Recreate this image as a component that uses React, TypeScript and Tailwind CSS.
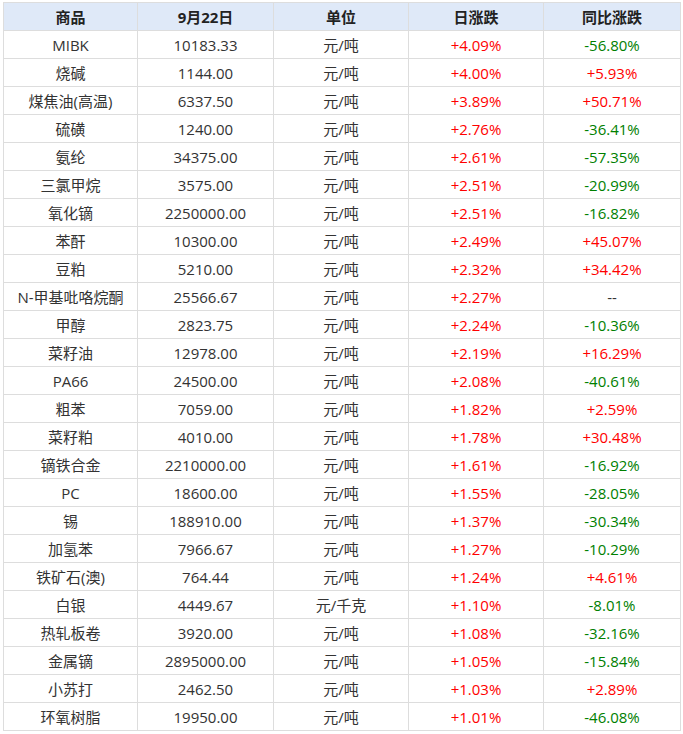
import React from 'react';

type Row = [string, string, string, string, string];

const rows: Row[] = [
  ['MIBK', '10183.33', '元/吨', '+4.09%', '-56.80%'],
  ['烧碱', '1144.00', '元/吨', '+4.00%', '+5.93%'],
  ['煤焦油(高温)', '6337.50', '元/吨', '+3.89%', '+50.71%'],
  ['硫磺', '1240.00', '元/吨', '+2.76%', '-36.41%'],
  ['氨纶', '34375.00', '元/吨', '+2.61%', '-57.35%'],
  ['三氯甲烷', '3575.00', '元/吨', '+2.51%', '-20.99%'],
  ['氧化镝', '2250000.00', '元/吨', '+2.51%', '-16.82%'],
  ['苯酐', '10300.00', '元/吨', '+2.49%', '+45.07%'],
  ['豆粕', '5210.00', '元/吨', '+2.32%', '+34.42%'],
  ['N-甲基吡咯烷酮', '25566.67', '元/吨', '+2.27%', '--'],
  ['甲醇', '2823.75', '元/吨', '+2.24%', '-10.36%'],
  ['菜籽油', '12978.00', '元/吨', '+2.19%', '+16.29%'],
  ['PA66', '24500.00', '元/吨', '+2.08%', '-40.61%'],
  ['粗苯', '7059.00', '元/吨', '+1.82%', '+2.59%'],
  ['菜籽粕', '4010.00', '元/吨', '+1.78%', '+30.48%'],
  ['镝铁合金', '2210000.00', '元/吨', '+1.61%', '-16.92%'],
  ['PC', '18600.00', '元/吨', '+1.55%', '-28.05%'],
  ['锡', '188910.00', '元/吨', '+1.37%', '-30.34%'],
  ['加氢苯', '7966.67', '元/吨', '+1.27%', '-10.29%'],
  ['铁矿石(澳)', '764.44', '元/吨', '+1.24%', '+4.61%'],
  ['白银', '4449.67', '元/千克', '+1.10%', '-8.01%'],
  ['热轧板卷', '3920.00', '元/吨', '+1.08%', '-32.16%'],
  ['金属镝', '2895000.00', '元/吨', '+1.05%', '-15.84%'],
  ['小苏打', '2462.50', '元/吨', '+1.03%', '+2.89%'],
  ['环氧树脂', '19950.00', '元/吨', '+1.01%', '-46.08%'],
];

// colour for a change value: red up, green down
const tone = (v: string) =>
  v.startsWith('+') ? 'text-[#ff0000]' : v.startsWith('-') && v !== '--' ? 'text-[#008000]' : 'text-[#333333]';

const cell = 'border border-[#dddddd] text-center p-0';

export default function App() {
  return (
    <div
      className="w-[683px] h-[734px] bg-white pt-[2px] pl-[3px]"
      style={{ fontFamily: '"Open Sans", "Noto Sans CJK SC", sans-serif' }}
    >
      <table className="border-collapse table-fixed w-[677px] text-[15px] leading-[20px] text-[#333333]">
        <colgroup>
          <col className="w-[134px]" />
          <col className="w-[136px]" />
          <col className="w-[135px]" />
          <col className="w-[135px]" />
          <col className="w-[137px]" />
        </colgroup>
        <thead>
          <tr className="h-[28px] bg-[#dfe9f8]">
            {['商品', '9月22日', '单位', '日涨跌', '同比涨跌'].map((h) => (
              <th key={h} className={`${cell} font-bold text-[#222222]`}>
                {h}
              </th>
            ))}
          </tr>
        </thead>
        <tbody>
          {rows.map(([name, price, unit, day, yoy]) => (
            <tr key={name} className="h-[28px]">
              <td className={cell}>{name}</td>
              <td className={cell}>{price}</td>
              <td className={cell}>{unit}</td>
              <td className={`${cell} ${tone(day)}`}>{day}</td>
              <td className={`${cell} ${tone(yoy)}`}>{yoy}</td>
            </tr>
          ))}
        </tbody>
      </table>
    </div>
  );
}
